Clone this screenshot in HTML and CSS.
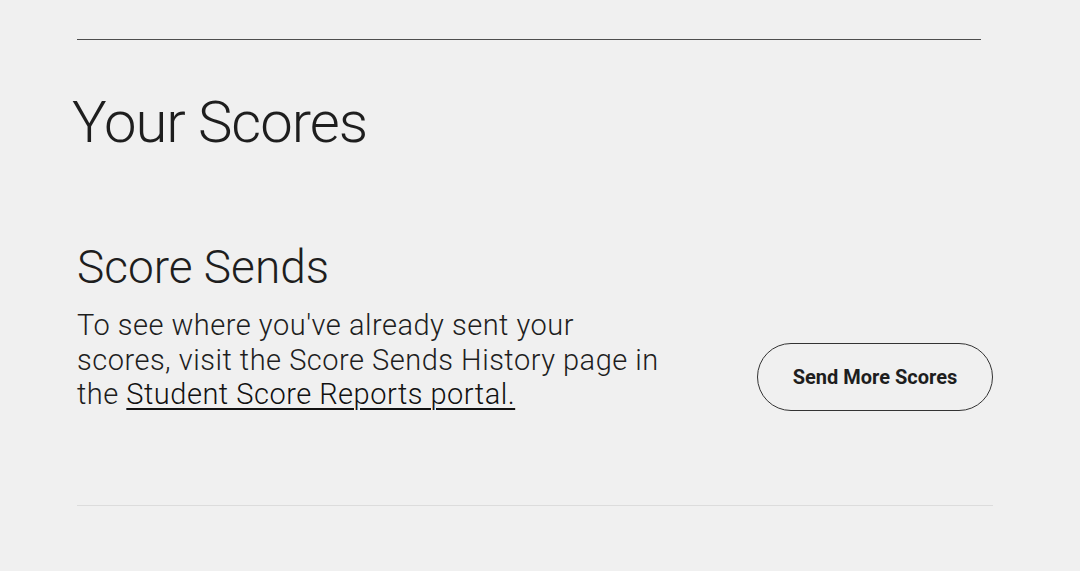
FILE: index.html
```html
<!DOCTYPE html>
<html lang="en">
<head>
<meta charset="utf-8">
<title>Your Scores</title>
<link rel="stylesheet" href="styles.css">
</head>
<body>
<main class="page">
  <hr class="top-rule">
  <h1 class="title">Your Scores</h1>
  <section class="sends">
    <div class="sends-text">
      <h2 class="sends-title">Score Sends</h2>
      <p class="sends-desc">To see where you've already sent your scores, visit the Score Sends History page in the <a href="#" class="portal-link">Student Score Reports portal.</a></p>
    </div>
    <button class="send-btn" type="button">Send More Scores</button>
  </section>
  <hr class="bottom-rule">
</main>
</body>
</html>
```

FILE: styles.css
```css
html, body {
  margin: 0;
  padding: 0;
  background: #f0f0f0;
}
body {
  font-family: Roboto, "Liberation Sans", sans-serif;
  color: #1e1e1e;
}
.page {
  padding: 39px 87px 0 77px;
}
.top-rule {
  margin: 0 12px 0 0;
  border: 0;
  height: 1px;
  background: #4d4d4d;
}
.title {
  margin: 48px 0 0 -5px;
  font-weight: 300;
  font-size: 58px;
  line-height: 68px;
  letter-spacing: -1px;
}
.sends {
  display: flex;
  align-items: flex-start;
  justify-content: space-between;
  margin-top: 85px;
}
.sends-text {
  width: 592px;
}
.sends-title {
  margin: 0;
  font-weight: 300;
  font-size: 46px;
  line-height: 52px;
}
.sends-desc {
  margin: 15px 0 0;
  font-weight: 300;
  font-size: 29px;
  line-height: 34.5px;
  letter-spacing: 0.5px;
}
.portal-link {
  color: #111;
  text-decoration: underline;
  text-decoration-thickness: 2px;
  text-underline-offset: 4px;
}
.send-btn {
  width: 236px;
  height: 68px;
  margin-top: 102px;
  border: 1px solid #333;
  border-radius: 34px;
  background: transparent;
  font-family: Roboto, "Liberation Sans", sans-serif;
  font-weight: 700;
  font-size: 20px;
  color: #1e1e1e;
}
.bottom-rule {
  margin: 93px 0 0;
  border: 0;
  height: 1px;
  background: #dcdcdc;
}
```
